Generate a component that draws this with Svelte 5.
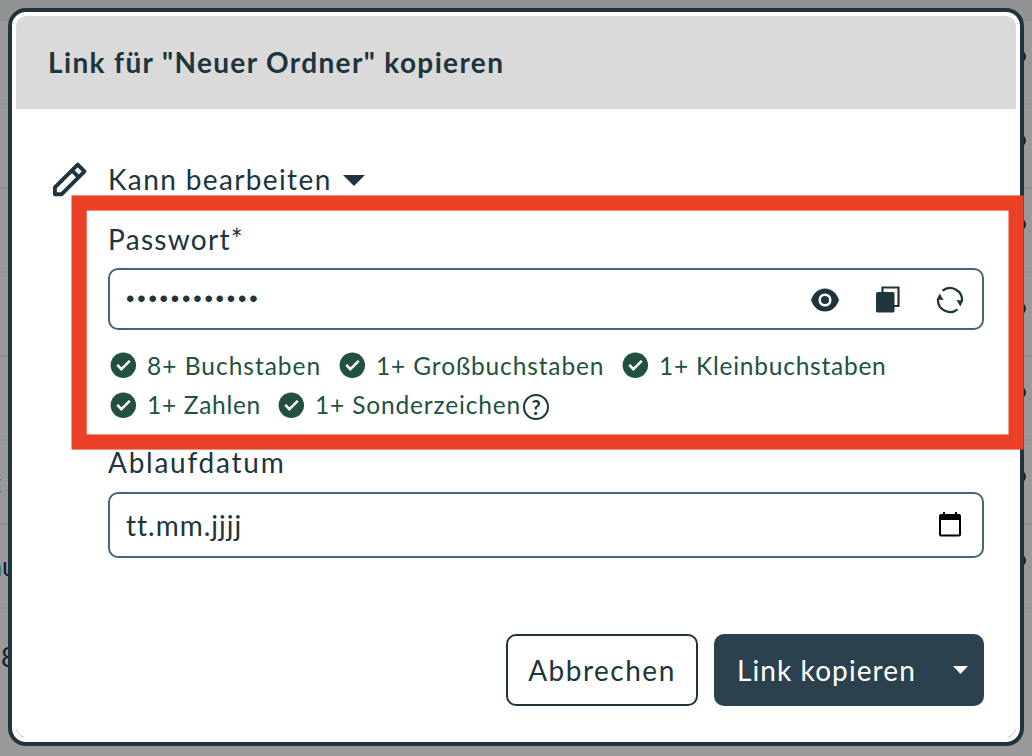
<script>
  const rules = [
    [
      { text: '8+ Buchstaben', width: 229, spacing: 1 },
      { text: '1+ Großbuchstaben', width: 283, spacing: 0.87 },
      { text: '1+ Kleinbuchstaben', width: 251, spacing: 0.76 }
    ],
    [
      { text: '1+ Zahlen', width: 168, spacing: 0.7 },
      { text: '1+ Sonderzeichen', width: 231, spacing: 0.84 }
    ]
  ];
  const lines = [19, 103, 187, 271, 355, 439, 523, 607];
  const menus = [56, 140, 224, 308, 392, 476, 560];
</script>

<div class="page">
  <svg class="backdrop" width="1032" height="756" viewBox="0 0 1032 756">
    <rect width="1032" height="756" fill="#999999" />
    <rect width="1032" height="19" fill="#919294" />
    {#each lines as y}
      <rect x="0" {y} width="1032" height="2" fill="#8f9092" />
    {/each}
    {#each menus as y}
      <circle cx="1019.500" cy={y + 0.5} r="6.5" fill="#14202a" />
    {/each}
    <text x="-8.5" y="493" class="under">t</text>
    <text x="-11" y="576" class="under">au</text>
    <text x="1" y="667" class="under">8</text>
  </svg>

  <div class="modal">
    <header><h1>Link für "Neuer Ordner" kopieren</h1></header>
    <main>
      <div class="role">
        <svg width="36" height="36" viewBox="0 0 36 36">
          <path d="M3 33V26L26.5 2.5L33.5 9.5L10 33ZM20.500 8.500L27.500 15.500" fill="none" stroke="#20343e" stroke-width="4" stroke-linejoin="round" transform="translate(0 1.200) scale(.97)" />
        </svg>
        <span class="role-text">Kann bearbeiten</span>
        <svg class="caret" width="22" height="11" viewBox="0 0 22 11"><path d="M0 0H22L11 11Z" fill="#20343e" /></svg>
      </div>

      <div class="fields">
        <div class="label pw">Passwort*</div>
        <div class="input password">
          <span class="dots">••••••••••••</span>
          <svg class="eye" width="28" height="24" viewBox="0 0 28 24">
            <path d="M0 12C2 5.500 7.400 .4 14 .4S26 5.500 28 12C26 18.500 20.600 23.600 14 23.600S2 18.500 0 12Z" fill="#20343e" />
            <circle cx="14" cy="12" r="5.300" fill="#20343e" stroke="#fff" stroke-width="2.500" />
          </svg>
          <svg class="copy" width="24" height="27" viewBox="0 0 24 27">
            <path d="M6.500 6V1.500H22.500V20H18" fill="none" stroke="#20343e" stroke-width="2.200" />
            <rect x="0" y="6" width="18.500" height="20.500" rx="1.500" fill="#20343e" />
          </svg>
          <svg class="renew" width="28" height="28" viewBox="0 0 28 28">
            <path d="M6.500 4.700A12 12 0 0 1 26 15M21.500 23.300A12 12 0 0 1 2 13" fill="none" stroke="#20343e" stroke-width="2.300" />
            <path d="M20.500 14L27.300 14.400L24.300 20.600ZM7.500 14L.7 13.600L3.700 7.400Z" fill="#20343e" />
          </svg>
        </div>

        <div class="rules">
          {#each rules as row}
            <div class="rule-row">
              {#each row as rule}
                <div class="rule" style="width:{rule.width}px">
                  <svg width="26" height="26" viewBox="0 0 26 26">
                    <circle cx="13.300" cy="13.300" r="12.700" fill="#22513f" />
                    <path d="M7.300 12.900L11.300 17.200L19.800 8.900" fill="none" stroke="#fff" stroke-width="2.500" />
                  </svg>
                  <span style="letter-spacing:{rule.spacing}px">{rule.text}</span>
                </div>
              {/each}
              {#if row.length === 2}
                <div class="help">?</div>
              {/if}
            </div>
          {/each}
        </div>

        <div class="label expiry">Ablaufdatum</div>
        <div class="input date">
          <span>tt.mm.jjjj</span>
          <svg width="22" height="25" viewBox="0 0 22 25">
            <path d="M4 0H6V2H16V0H18V2H20Q22 2 22 4V22.500Q22 24.500 20 24.500H2Q0 24.500 0 22.500V4Q0 2 2 2H4ZM2 8V22.500H20V8Z" fill="#000" fill-rule="evenodd" />
          </svg>
        </div>
      </div>

      <footer>
        <button class="cancel">Abbrechen</button>
        <button class="submit">
          <span>Link kopieren</span>
          <svg width="15" height="8" viewBox="0 0 15 8"><path d="M0 0H15L7.500 8Z" fill="#fff" /></svg>
        </button>
      </footer>
    </main>
  </div>

  <svg class="highlight" width="1032" height="756" viewBox="0 0 1032 756">
    <path d="M16.500 729Q18 735.500 24.500 737.500M1015.500 729Q1014 735.500 1007.500 737.500" fill="none" stroke="#b5b5b5" stroke-width=".7" />
    <rect x="79.100" y="203" width="937" height="239" fill="none" stroke="#ea4026" stroke-width="15.200" />
  </svg>
</div>

<style>
  :global(body) { margin: 0; background: #999; }
  .page {
    position: relative;
    box-sizing: border-box;
    width: 1032px;
    height: 756px;
    padding: 8px 8px 10px;
    overflow: hidden;
    font-family: Lato, "Liberation Sans", sans-serif;
    font-size: 28px;
    color: #20343e;
  }
  svg { display: block; flex: none; }
  .backdrop, .highlight { position: absolute; left: 0; top: 0; }
  .highlight { pointer-events: none; }
  .under { font-size: 26px; fill: #14202a; }
  .modal {
    position: relative;
    box-sizing: border-box;
    height: 738px;
    padding: 4px;
    border: 4px solid #20343e;
    border-radius: 18px;
    background: #fff;
  }
  header {
    box-sizing: border-box;
    height: 93px;
    padding: 0 32px 1px;
    display: flex;
    align-items: center;
    background: #dadada;
    border-radius: 10px 10px 0 0;
  }
  h1 { margin: 0; font-size: 28px; font-weight: 700; line-height: 34px; letter-spacing: 1.36px; white-space: nowrap; }
  main { padding: 49px 32px 0 36px; }
  .role { display: flex; align-items: center; height: 42px; }
  .role-text { width: 236px; margin-left: 20px; line-height: 40px; letter-spacing: 1.38px; white-space: nowrap; }
  .caret { margin-left: -1px; margin-top: 2px; }
  .fields { margin-left: 56px; }
  .label { height: 30px; line-height: 30px; letter-spacing: 1.3px; }
  .pw { margin-top: 24px; margin-bottom: -1px; }
  .expiry { margin-top: 22px; letter-spacing: 1.75px; }
  .input {
    box-sizing: border-box;
    display: flex;
    align-items: center;
    margin-top: 15px;
    border: 2px solid #456674;
    border-radius: 10px;
    background: #fff;
  }
  .password { height: 62px; padding: 0 18px 0 16px; }
  .dots { flex: 1; font-family: "Liberation Sans", sans-serif; font-size: 24px; letter-spacing: 2.8px; }
  .eye { margin-right: 37px; margin-top: 1px; }
  .copy { margin-right: 36px; }
  .renew { margin-top: 1px; }
  .date { height: 66px; padding: 0 21px 0 16px; justify-content: space-between; letter-spacing: 1px; }
  .date svg { margin-top: -2px; }
  .rules { padding: 15px 0 0 2px; font-size: 24.5px; color: #22513f; }
  .rule-row { display: flex; align-items: center; height: 40px; }
  .rule { display: flex; align-items: center; gap: 11px; white-space: nowrap; }
  .rule span { margin-top: -2px; }
  .rule-row:first-child .rule span { margin-top: 0; }
  .help {
    box-sizing: border-box;
    width: 26px;
    height: 26px;
    margin: 4px 0 0 14px;
    border: 2px solid #20343e;
    border-radius: 50%;
    color: #20343e;
    font-size: 20px;
    font-weight: 700;
    line-height: 22px;
    text-align: center;
  }
  footer { display: flex; justify-content: flex-end; gap: 16px; margin-top: 76px; }
  button { box-sizing: border-box; height: 72px; padding: 0; border: 2px solid #20343e; border-radius: 10px; font: inherit; letter-spacing: 1.1px; }
  .cancel { width: 192px; color: #20343e; background: #fff; letter-spacing: 1.5px; }
  .submit { display: flex; align-items: center; justify-content: space-between; width: 270px; padding: 0 14px 0 21px; border-color: #2b424e; color: #fff; background: #2b424e; }
</style>
